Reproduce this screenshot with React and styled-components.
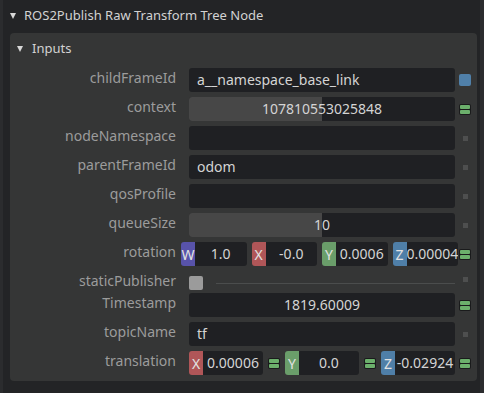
import React from "react";
import styled, { createGlobalStyle } from "styled-components";

const GlobalStyle = createGlobalStyle`
  html, body { margin: 0; padding: 0; background: #232426; }
  body { font-family: "Noto Sans", "Open Sans", sans-serif; font-stretch: 87.5%; }
  * { box-sizing: border-box; }
`;

const Frame = styled.div`
  width: 484px;
  height: 393px;
  overflow: hidden;
  background: #232426;
  display: flex;
  flex-direction: column;
  border-left: 3px solid #2b2c2e;
  border-right: 4px solid #2b2c2e;
`;

const NodeHeader = styled.div`
  height: 30px;
  display: flex;
  align-items: center;
  gap: 8px;
  padding-left: 7px;
  color: #d2d2d2;
  font-size: 13px;
`;

const Caret = styled.span`
  width: 0;
  height: 0;
  border-left: 3.5px solid transparent;
  border-right: 3.5px solid transparent;
  border-top: 6px solid #d8d8d8;
  margin-top: 1px;
`;

const Panel = styled.div`
  margin: 3px 3px 0 7px;
  background: #353636;
  border-radius: 4px;
  padding-bottom: 6px;
  display: flex;
  flex-direction: column;
  gap: 5px;
`;

const PanelHeader = styled.div`
  height: 30px;
  display: flex;
  align-items: center;
  gap: 9px;
  padding-left: 7px;
  color: #d2d2d2;
  font-size: 13px;
`;

const Row = styled.div`
  display: grid;
  grid-template-columns: 179px 1fr 22px;
  height: ${(p) => p.$h || 24}px;
`;

const Label = styled.div`
  text-align: right;
  padding-right: 13px;
  color: #9c9c9c;
  font-size: 14px;
  line-height: 20px;
  white-space: nowrap;
`;

const Field = styled.div`
  position: relative;
  height: 24px;
  background: #1f2023;
  border-radius: 3px;
  overflow: hidden;
  color: #d4d4d4;
  font-size: 14px;
  line-height: 24px;
  padding: 0 8px;
  text-align: ${(p) => (p.$center ? "center" : "left")};
`;

const Fill = styled.div`
  position: absolute;
  left: 0;
  top: 0;
  bottom: 0;
  background: #474747;
`;

const FieldText = styled.span`
  position: relative;
`;

const Conn = styled.div`
  display: flex;
  align-items: ${(p) => (p.$top ? "flex-start" : "center")};
  justify-content: center;
  padding-right: 2px;
  padding-top: ${(p) => (p.$top ? "6px" : "0")};
`;

const BlueDot = styled.div`
  width: 12px;
  height: 12px;
  border-radius: 2px;
  background: #5080a9;
`;

const GrayDot = styled.div`
  width: 5px;
  height: 5px;
  background: #4e4f4f;
`;

const EqBox = styled.div`
  width: 12px;
  height: 11px;
  padding: 1px;
  border-radius: 2px;
  background: #1a1b1c;
  display: flex;
  flex-direction: column;
  gap: 1px;
  flex: none;
`;

const EqBar = styled.div`
  flex: 1;
  border-radius: 1px;
  background: #6cb06c;
`;

const Eq = () => (
  <EqBox>
    <EqBar />
    <EqBar />
  </EqBox>
);

const Vec = styled.div`
  display: flex;
  align-items: center;
  gap: 5px;
  margin: ${(p) => p.$margin || "0"};
`;

const Comp = styled.div`
  flex: 1;
  min-width: 0;
  display: flex;
  height: 24px;
`;

const CompTag = styled.div`
  width: 14px;
  flex: none;
  background: ${(p) => p.$color};
  border-radius: 3px 0 0 3px;
  color: #e2e2e2;
  font-size: 14px;
  line-height: 26px;
  text-align: center;
`;

const CompVal = styled.div`
  flex: 1;
  min-width: 0;
  background: #1f2023;
  border-radius: 0 3px 3px 0;
  color: #d4d4d4;
  font-size: 14px;
  line-height: 24px;
  text-align: center;
  white-space: nowrap;
  overflow: hidden;
`;

const TAG = { W: "#5853aa", X: "#b05658", Y: "#6a9e6a", Z: "#4f7fa8" };

const Component = ({ k, v }) => (
  <Comp>
    <CompTag $color={TAG[k]}>{k}</CompTag>
    <CompVal>{v}</CompVal>
  </Comp>
);

const CheckRow = styled.div`
  display: flex;
  align-items: center;
  gap: 13px;
  padding-top: 4px;
`;

const Check = styled.div`
  width: 14px;
  height: 14px;
  border-radius: 2px;
  background: #9b9b9b;
  flex: none;
`;

const Rule = styled.div`
  flex: 1;
  height: 1px;
  background: #4b4d4d;
`;

export default function App() {
  return (
    <>
      <GlobalStyle />
      <Frame>
        <NodeHeader>
          <Caret />
          <span>ROS2Publish Raw Transform Tree Node</span>
        </NodeHeader>
        <Panel>
          <PanelHeader>
            <Caret />
            <span>Inputs</span>
          </PanelHeader>

          <Row>
            <Label>childFrameId</Label>
            <Field>a__namespace_base_link</Field>
            <Conn><BlueDot /></Conn>
          </Row>

          <Row>
            <Label>context</Label>
            <Field $center>
              <Fill style={{ width: "50%" }} />
              <FieldText>107810553025848</FieldText>
            </Field>
            <Conn><Eq /></Conn>
          </Row>

          <Row>
            <Label>nodeNamespace</Label>
            <Field />
            <Conn><GrayDot /></Conn>
          </Row>

          <Row>
            <Label>parentFrameId</Label>
            <Field>odom</Field>
            <Conn><GrayDot /></Conn>
          </Row>

          <Row>
            <Label>qosProfile</Label>
            <Field />
            <Conn><GrayDot /></Conn>
          </Row>

          <Row>
            <Label>queueSize</Label>
            <Field $center>
              <Fill style={{ width: "50%" }} />
              <FieldText>10</FieldText>
            </Field>
            <Conn><GrayDot /></Conn>
          </Row>

          <Row>
            <Label>rotation</Label>
            <Vec $margin="0 -3px 0 -8px">
              <Component k="W" v="1.0" />
              <Component k="X" v="-0.0" />
              <Component k="Y" v="0.0006" />
              <Component k="Z" v="0.00004" />
            </Vec>
            <Conn><Eq /></Conn>
          </Row>

          <Row $h={17}>
            <Label>staticPublisher</Label>
            <CheckRow>
              <Check />
              <Rule />
            </CheckRow>
            <Conn $top><GrayDot /></Conn>
          </Row>

          <Row>
            <Label>Timestamp</Label>
            <Field $center>1819.60009</Field>
            <Conn><Eq /></Conn>
          </Row>

          <Row>
            <Label>topicName</Label>
            <Field>tf</Field>
            <Conn><GrayDot /></Conn>
          </Row>

          <Row>
            <Label>translation</Label>
            <Vec>
              <Component k="X" v="0.00006" />
              <Eq />
              <Component k="Y" v="0.0" />
              <Eq />
              <Component k="Z" v="-0.02924" />
            </Vec>
            <Conn><Eq /></Conn>
          </Row>
        </Panel>
      </Frame>
    </>
  );
}
